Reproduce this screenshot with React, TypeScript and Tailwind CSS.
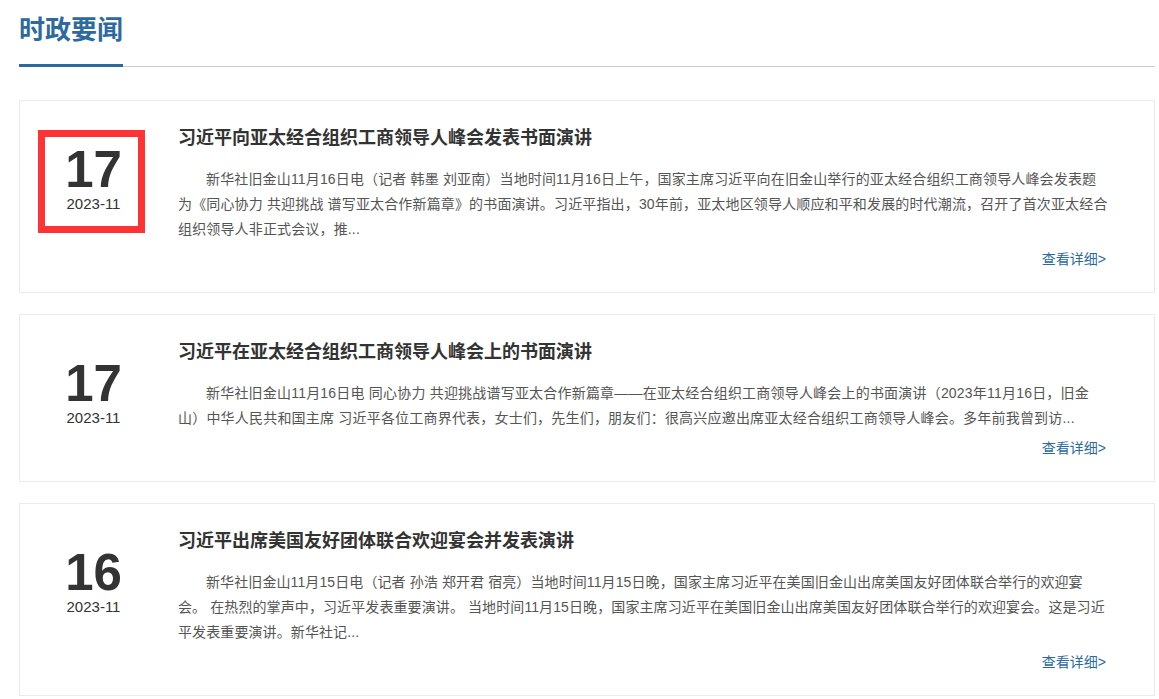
const news = [
  {
    day: "17",
    month: "2023-11",
    title: "习近平向亚太经合组织工商领导人峰会发表书面演讲",
    summary:
      "新华社旧金山11月16日电（记者 韩墨 刘亚南）当地时间11月16日上午，国家主席习近平向在旧金山举行的亚太经合组织工商领导人峰会发表题为《同心协力 共迎挑战 谱写亚太合作新篇章》的书面演讲。习近平指出，30年前，亚太地区领导人顺应和平和发展的时代潮流，召开了首次亚太经合组织领导人非正式会议，推...",
    marked: true,
    spacing: "tracking-[0.15px]",
  },
  {
    day: "17",
    month: "2023-11",
    title: "习近平在亚太经合组织工商领导人峰会上的书面演讲",
    summary:
      "新华社旧金山11月16日电 同心协力 共迎挑战谱写亚太合作新篇章——在亚太经合组织工商领导人峰会上的书面演讲（2023年11月16日，旧金山）中华人民共和国主席 习近平各位工商界代表，女士们，先生们，朋友们：很高兴应邀出席亚太经合组织工商领导人峰会。多年前我曾到访...",
    marked: false,
    spacing: "tracking-[0.2px]",
  },
  {
    day: "16",
    month: "2023-11",
    title: "习近平出席美国友好团体联合欢迎宴会并发表演讲",
    summary:
      "新华社旧金山11月15日电（记者 孙浩 郑开君 宿亮）当地时间11月15日晚，国家主席习近平在美国旧金山出席美国友好团体联合举行的欢迎宴会。 在热烈的掌声中，习近平发表重要演讲。 当地时间11月15日晚，国家主席习近平在美国旧金山出席美国友好团体联合举行的欢迎宴会。这是习近平发表重要演讲。新华社记...",
    marked: false,
    spacing: "tracking-[0.1px]",
  },
];

export default function App() {
  return (
    <div
      className="bg-white pt-[12px] pl-[19px] pr-[4px] pb-[10px]"
      style={{ fontFamily: '"Liberation Sans", "Noto Sans CJK SC", sans-serif' }}
    >
      <div className="border-b border-[#cccccc]">
        <h2 className="inline-block -mb-px border-b-[3px] border-[#2b6a9f] pb-[16px] text-[26px] leading-[36px] font-bold text-[#2d6a9e]">
          时政要闻
        </h2>
      </div>

      <div className="mt-[33px] flex flex-col gap-[21px]">
        {news.map((item, index) => (
          <div
            key={index}
            className="flex items-start border border-[#ebebeb] pl-[18px] pr-[45px] pt-[24px] pb-[21px]"
          >
            <div
              className={
                item.marked
                  ? "mt-[5px] w-[107px] shrink-0 border-[7px] border-[#ff3333] pl-[4px] pt-[9px] pb-[14px] text-center text-[#333]"
                  : "mt-[5px] w-[107px] shrink-0 border-[7px] border-transparent pl-[4px] pt-[9px] pb-[14px] text-center text-[#333]"
              }
            >
              <div className="text-[51px] leading-[48px] font-bold">{item.day}</div>
              <div className="mt-[2px] text-[15px] leading-[16px]">{item.month}</div>
            </div>
            <div className="ml-[33px] flex-1">
              <h3 className="text-[18px] leading-[26px] font-bold text-[#333]">
                {item.title}
              </h3>
              <p
                className={`mt-[16px] indent-[2em] text-[14px] leading-[25px] text-[#555] ${item.spacing}`}
              >
                {item.summary}
              </p>
              <div className="mt-[5px] pr-[3px] text-right text-[14px] leading-[24px] text-[#2b6a9f]">
                <a href="#">查看详细&gt;</a>
              </div>
            </div>
          </div>
        ))}
      </div>
    </div>
  );
}
